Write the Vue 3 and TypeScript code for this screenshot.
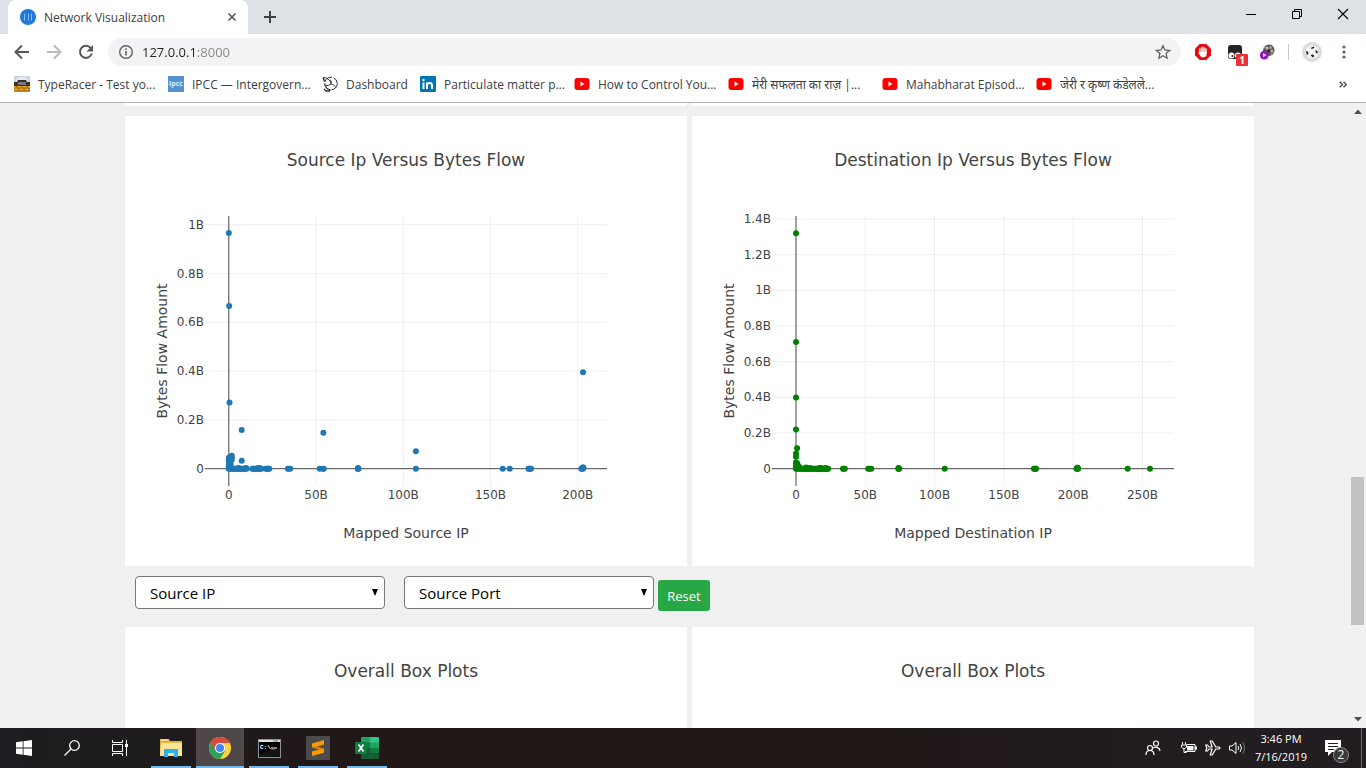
<script setup lang="ts">
import { ref } from 'vue'

interface Point { x: number; y: number }
interface Chart {
  title: string
  xTitle: string
  yTitle: string
  color: string
  originX: number
  xScale: number
  yScale: number
  xTicks: number[]
  yTicks: number[]
  points: Point[]
}

const ORIGIN_Y = 352.7

const at = (y: number, xs: number[]): Point[] => xs.map(x => ({ x, y }))
const up = (x: number, ys: number[]): Point[] => ys.map(y => ({ x, y }))

const charts: Chart[] = [
  {
    title: 'Source Ip Versus Bytes Flow',
    xTitle: 'Mapped Source IP',
    yTitle: 'Bytes Flow Amount',
    color: '#1f77b4',
    originX: 103.8,
    xScale: 1.745,
    yScale: 244,
    xTicks: [0, 50, 100, 150, 200],
    yTicks: [0, 0.2, 0.4, 0.6, 0.8, 1],
    points: [
      ...up(0, [0.966, 0.045, 0.035, 0.025, 0.015, 0.008]),
      ...up(0.2, [0.667]),
      ...up(0.4, [0.271]),
      ...up(1.7, [0.053, 0.047, 0.038]),
      ...up(1, [0.047, 0.03, 0.02, 0.01]),
      ...up(7.4, [0.159, 0.033]),
      { x: 54.2, y: 0.147 },
      { x: 107.2, y: 0.072 },
      { x: 203, y: 0.395 },
      ...at(0.005, [202.8, 203.2]),
      ...at(0.003, [5.5, 9.8, 16.8, 17.6, 74.1]),
      ...at(0, [0, 1, 2, 2.5, 3, 3.7, 4.5, 5.2, 6, 6.5, 7, 7.5, 8, 8.5, 9, 9.6, 10.3]),
      ...at(0, [13.5, 14, 14.6, 15.2, 15.8, 16.4, 17, 17.5, 18, 18.8, 21.3, 21.8, 22.2, 22.7, 23.2]),
      ...at(0, [33.9, 34.3, 35.2, 52.1, 54, 54.4, 73.9, 74, 74.3, 107.2, 157, 161, 171.8, 172, 172.8, 173.2, 202, 202.4, 203]),
    ],
  },
  {
    title: 'Destination Ip Versus Bytes Flow',
    xTitle: 'Mapped Destination IP',
    yTitle: 'Bytes Flow Amount',
    color: '#008000',
    originX: 104,
    xScale: 1.386,
    yScale: 178.3,
    xTicks: [0, 50, 100, 150, 200, 250],
    yTicks: [0, 0.2, 0.4, 0.6, 0.8, 1, 1.2, 1.4],
    points: [
      ...up(0, [1.32, 0.71, 0.4, 0.22, 0.085, 0.067, 0.035, 0.028, 0.015]),
      ...up(0.8, [0.115, 0.03, 0.02, 0.01]),
      ...up(1.7, [0.015]),
      ...at(0.007, [2.5, 7.3]),
      ...at(0.004, [10, 17, 18, 21.3, 74.1]),
      ...at(0, [0, 1, 2, 3, 3.7, 4.5, 5.2, 6, 6.500, 7, 7.5, 8, 8.5, 9, 9.7, 10.3, 11, 11.6, 12.3, 13, 13.8]),
      ...at(0, [14.6, 15.2, 15.8, 16.4, 17, 17.5, 18, 18.8, 19.5, 20.4, 21.3, 21.8, 22.2, 22.7, 23.2]),
      ...at(0, [33.9, 34.3, 35.2, 52.1, 53, 54.3, 73.8, 74, 74.4, 107.3, 171.7, 172, 172.9, 173.2, 202.4, 203.2, 203.5, 239.3, 255.4]),
      ...at(0.006, [202.9, 203.2]),
    ],
  },
]

const px = (c: Chart, x: number): number => c.originX + x * c.xScale
const py = (c: Chart, y: number): number => ORIGIN_Y - y * c.yScale
const label = (v: number): string => (v === 0 ? '0' : `${v}B`)

const address = ref('127.0.0.1:8000')
const source = ref('Source IP')
const port = ref('Source Port')
const reset = (): void => {
  source.value = 'Source IP'
  port.value = 'Source Port'
}

const bookmarks = [
  { icon: 'racer', text: 'TypeRacer - Test yo...' },
  { icon: 'ipcc', text: 'IPCC — Intergovern...' },
  { icon: 'dash', text: 'Dashboard' },
  { icon: 'linkedin', text: 'Particulate matter p...' },
  { icon: 'youtube', text: 'How to Control You...' },
  { icon: 'youtube', text: 'मेरी सफलता का राज़ |...' },
  { icon: 'youtube', text: 'Mahabharat Episod...' },
  { icon: 'youtube', text: 'जेरी र कृष्ण कंडेलले...' },
]
</script>

<template>
  <div class="screen">
    <header class="browser">
      <div class="tabstrip">
        <div class="tab">
          <svg width="16" height="16" viewBox="0 0 16 16"><circle cx="8" cy="8" r="8" fill="#1f77e0" /><path d="M4.500 4.500v7M8.500 4.500v7M11.500 4.500v7" stroke="#8cc0f5" stroke-width="1" /></svg>
          <span class="tab-title">Network Visualization</span>
          <button class="plain tab-close" aria-label="Close tab"><svg width="8" height="8" viewBox="0 0 8 8"><path d="M.5.5l7 7M7.500.5l-7 7" stroke="#4a4d51" stroke-width="1.500" /></svg></button>
        </div>
        <button class="plain new-tab" aria-label="New tab"><svg width="12" height="12" viewBox="0 0 12 12"><path d="M6 0v12M0 6h12" stroke="#3c4043" stroke-width="2" /></svg></button>
        <div class="window-controls">
          <button class="plain" aria-label="Minimize"><svg width="10" height="10" viewBox="0 0 10 10"><path d="M0 5.500h10" stroke="#000" /></svg></button>
          <button class="plain" aria-label="Restore"><svg width="10" height="10" viewBox="0 0 10 10"><path d="M.5 2.500h7v7h-7zM2.500 2.500v-2h7v7h-2" fill="none" stroke="#000" /></svg></button>
          <button class="plain" aria-label="Close"><svg width="12" height="12" viewBox="0 0 12 12"><path d="M1 1l10 10M11 1L1 11" stroke="#000" stroke-width="1.100" /></svg></button>
        </div>
      </div>

      <div class="toolbar">
        <button class="plain nav" aria-label="Back"><svg width="16" height="16" viewBox="0 0 16 16"><path d="M15 8H2M8 1.500L1.500 8 8 14.500" fill="none" stroke="#55585c" stroke-width="2" /></svg></button>
        <button class="plain nav" aria-label="Forward"><svg width="16" height="16" viewBox="0 0 16 16"><path d="M1 8h13M8 1.500L14.500 8 8 14.500" fill="none" stroke="#b9bbbe" stroke-width="2" /></svg></button>
        <button class="plain nav" aria-label="Reload"><svg width="16" height="16" viewBox="0 0 16 16"><path d="M12.800 4.200A6 6 0 1 0 13.800 9.500" fill="none" stroke="#55585c" stroke-width="2" /><path d="M15 1v6.500H8.500z" fill="#55585c" /></svg></button>
        <div class="omnibox">
          <svg width="16" height="16" viewBox="0 0 16 16"><circle cx="8" cy="8" r="6.300" fill="none" stroke="#5f6368" stroke-width="1.400" /><path d="M8 7v4.500M8 4.300v1.700" stroke="#5f6368" stroke-width="1.600" /></svg>
          <input v-model="address" class="address" aria-label="Address" spellcheck="false">
          <button class="plain" aria-label="Bookmark"><svg width="16" height="16" viewBox="0 0 16 16"><path d="M8 1.700l1.900 4.300 4.700.5-3.500 3.100 1 4.600L8 11.800l-4.100 2.400 1-4.600L1.400 6.500l4.700-.5z" fill="none" stroke="#5f6368" stroke-width="1.300" /></svg></button>
        </div>
        <div class="extensions">
          <button class="plain" aria-label="Ad blocker"><svg width="16" height="16" viewBox="0 0 16 16"><path d="M4.700 0h6.600L16 4.700v6.600L11.300 16H4.700L0 11.300V4.700z" fill="#e40d12" /><path d="M5 8.500V5M7 8.500V3.500M9 8.500V3.500M11 8.500V5" stroke="#fff" stroke-width="1.500" stroke-linecap="round" /><path d="M4.300 8h7.400v2c0 4-5 4-6.200 2.200L3.300 8.700l.8-.6z" fill="#fff" /></svg></button>
          <button class="plain badge-host" aria-label="Userscripts">
            <svg width="16" height="16" viewBox="0 0 16 16"><rect x="1" y="1" width="14" height="14" rx="3" fill="#252525" /><circle cx="4.500" cy="11.500" r="3" fill="#fff" /><circle cx="11" cy="11.500" r="3" fill="#fff" /><circle cx="5.500" cy="12" r="1" fill="#222" /></svg>
            <span class="badge">1</span>
          </button>
          <button class="plain" aria-label="Recorder"><svg width="16" height="16" viewBox="0 0 18 18"><circle cx="11" cy="7" r="6.500" fill="#5c5852" /><circle cx="9" cy="4.500" r="1.800" fill="#c7c3b9" /><circle cx="13" cy="4" r="1.600" fill="#a7a298" /><circle cx="14.500" cy="8" r="1.700" fill="#bdb8ad" /><circle cx="11" cy="8" r="1.500" fill="#272521" /><path d="M4 6l3-3M13 12l2-1" stroke="#c9c5b9" /><circle cx="6" cy="12.500" r="5" fill="#9118be" /><path d="M4.500 10v5l4-2.500z" fill="#e8c9f2" /></svg></button>
          <span class="rule" />
          <button class="plain" aria-label="Profile"><svg width="20" height="20" viewBox="0 0 20 20"><circle cx="10" cy="10" r="10" fill="#dcdcdc" /><circle cx="10" cy="10" r="6.500" fill="#f7f7f7" /><path d="M8.500 6l3-1.500 1 1.200-2.500 1.300zM4 9l2 .5.500 2.500-1.700 1zM13.500 8l2 1v2.500l-1.800-.8zM8.500 13l2.500-.5 1.500 1.500-2 1.500z" fill="#1f1f1f" /></svg></button>
          <button class="plain menu" aria-label="Menu"><svg width="4" height="14" viewBox="0 0 4 14"><g fill="#5f6368"><circle cx="2" cy="2" r="1.600" /><circle cx="2" cy="7" r="1.600" /><circle cx="2" cy="12" r="1.600" /></g></svg></button>
        </div>
      </div>

      <nav class="bookmarks">
        <a v-for="(b, i) in bookmarks" :key="i" href="#" class="bookmark" :class="{ short: b.icon === 'dash' }">
          <svg v-if="b.icon === 'racer'" width="16" height="16" viewBox="0 0 16 16"><rect width="16" height="7" fill="#cdd3e6" /><path d="M2 8V4l3-3h6l3 3v4z" fill="#e8e9ee" /><path d="M0 6h3l1-2h8l1 2h3v4H0z" fill="#34312d" /><path d="M4 6h8v3H4z" fill="#77777c" /><path d="M0 10h16v6H0z" fill="#e9a61b" /><path d="M0 12h16M0 15h16M3 10v2M8 10v2M13 10v2M5 12v3M10 12v3M15 12v3" stroke="#8f5710" stroke-width=".8" /></svg>
          <svg v-else-if="b.icon === 'ipcc'" width="16" height="16" viewBox="0 0 16 16"><rect width="16" height="16" fill="#5593d2" /><text x="8" y="10" text-anchor="middle" font-size="7" fill="#dcecff" font-weight="bold">ipcc</text></svg>
          <svg v-else-if="b.icon === 'dash'" width="16" height="16" viewBox="0 0 16 16" fill="none" stroke="#333"><circle cx="9" cy="7.500" r="6.300" stroke-dasharray="9 1.500" /><path d="M1 1.500c4 0 7 2.500 8 5.500M8 4c2 1 2 3 0 4.500s-4 1-6 0M8 8.500c2-1 4.500 0 5.500 3M4 10a4 4 0 0 0 5 4" /><path d="M1 1.500l1.500 4M2 13l2 2 4 0" stroke-width="1.400" /></svg>
          <svg v-else-if="b.icon === 'linkedin'" width="16" height="16" viewBox="0 0 16 16"><rect width="16" height="16" rx="1" fill="#0077b5" /><path d="M3.500 6.500v6.500M7 6.500V13M7 9.500c0-3.200 5-3.200 5 0V13" fill="none" stroke="#fff" stroke-width="2" /><circle cx="3.500" cy="4" r="1.200" fill="#fff" /></svg>
          <svg v-else width="16" height="16" viewBox="0 0 16 16"><rect y="2" x="0.500" width="15" height="12" rx="3" fill="#f00" /><path d="M6.500 5.500v5l4-2.500z" fill="#fff" /></svg>
          <span>{{ b.text }}</span>
        </a>
        <button class="plain more" aria-label="More bookmarks"><svg width="8" height="7" viewBox="0 0 8 7"><path d="M.7.7l2.800 2.800L.7 6.300M4.500.7l2.800 2.800-2.800 2.800" fill="none" stroke="#4a4d51" stroke-width="1.400" /></svg></button>
      </nav>
    </header>

    <div class="viewport">
      <main class="page">
        <div class="cards strip"><div class="card" /><div class="card" /></div>
        <div class="cards">
          <section v-for="c in charts" :key="c.title" class="card">
            <svg class="plot" viewBox="0 0 562 450">
              <text class="title" x="281" y="50">{{ c.title }}</text>
              <g class="grid">
                <line v-for="t in c.xTicks.slice(1)" :key="'x' + t" :x1="px(c, t)" :x2="px(c, t)" y1="100" y2="370" />
                <line v-for="t in c.yTicks.slice(1)" :key="'y' + t" :y1="py(c, t)" :y2="py(c, t)" x1="80" x2="482" />
                <line class="zero" :x1="px(c, 0)" :x2="px(c, 0)" y1="100" y2="370" />
                <line class="zero" :y1="py(c, 0)" :y2="py(c, 0)" x1="80" x2="482" />
              </g>
              <g :fill="c.color">
                <circle v-for="(p, i) in c.points" :key="i" :cx="px(c, p.x)" :cy="py(c, p.y)" r="3" />
              </g>
              <text v-for="t in c.xTicks" :key="'lx' + t" class="tick mid" :x="px(c, t)" y="383">{{ label(t) }}</text>
              <text v-for="t in c.yTicks" :key="'ly' + t" class="tick end" x="79" :y="py(c, t) + 4">{{ label(t) }}</text>
              <text class="axis" x="281" y="422">{{ c.xTitle }}</text>
              <text class="axis" x="0" y="0" transform="translate(42 235) rotate(-90)">{{ c.yTitle }}</text>
            </svg>
          </section>
        </div>

        <form class="filters" @submit.prevent="reset">
          <label class="pick">
            <select v-model="source" aria-label="Source or destination IP">
              <option>Source IP</option>
              <option>Destination IP</option>
            </select>
            <svg width="6" height="7" viewBox="0 0 6 7"><path d="M0 0h6L3 7z" fill="#000" /></svg>
          </label>
          <label class="pick">
            <select v-model="port" aria-label="Source or destination port">
              <option>Source Port</option>
              <option>Destination Port</option>
            </select>
            <svg width="6" height="7" viewBox="0 0 6 7"><path d="M0 0h6L3 7z" fill="#000" /></svg>
          </label>
          <button type="submit" class="reset">Reset</button>
        </form>

        <div class="cards">
          <section v-for="n in 2" :key="n" class="card">
            <svg class="plot" viewBox="0 0 562 450"><text class="title" x="281" y="50">Overall Box Plots</text></svg>
          </section>
        </div>
      </main>
      <div class="scrollbar">
        <button class="plain arrow" aria-label="Scroll up"><svg width="8" height="5" viewBox="0 0 8 5"><path d="M0 5l4-4.500L8 5z" fill="#505050" /></svg></button>
        <div class="before" />
        <div class="thumb" />
        <div class="after" />
        <button class="plain arrow" aria-label="Scroll down"><svg width="8" height="5" viewBox="0 0 8 5"><path d="M0 0l4 4.500L8 0z" fill="#505050" /></svg></button>
      </div>
    </div>

    <footer class="taskbar">
      <button class="plain task" aria-label="Start"><svg width="16" height="16" viewBox="0 0 16 16"><path d="M0 2.200L6.700 1.300V7.600H0zM7.500 1.200L16 0v7.600H7.500zM0 8.400h6.700v6.300L0 13.800zM7.500 8.400H16V16l-8.500-1.200z" fill="#fff" /></svg></button>
      <button class="plain task" aria-label="Search"><svg width="16" height="16" viewBox="0 0 16 16" fill="none" stroke="#fff" stroke-width="1.300"><circle cx="10.500" cy="5.500" r="4.800" /><path d="M7 9L.5 15.500" /></svg></button>
      <button class="plain task" aria-label="Task view"><svg width="16" height="16" viewBox="0 0 16 16" fill="none" stroke="#fff"><path d="M.5 4.500h10v7H.5zM.5 0v2.500h10V0M.5 16v-2.500h10V16M14.500 0v16" /><rect x="13.500" y="4.500" width="2" height="2" fill="#fff" /></svg></button>
      <button class="plain task open first" aria-label="File Explorer"><svg width="22" height="20" viewBox="0 0 22 20"><path d="M0 1h9l1 2h12v15H0z" fill="#e3b341" /><path d="M1 5h21v13H0z" fill="#fde596" /><path d="M1 2h7" stroke="#fff3c4" /><path d="M4 19v-8h14v8h-4v-4H8v4z" fill="#31b1ea" /></svg></button>
      <button class="plain task open active" aria-label="Chrome"><svg width="22" height="22" viewBox="0 0 22 22"><circle cx="11" cy="11" r="11" fill="#fdd23f" /><path d="M11 11L1.500 5.500A11 11 0 0 0 11 22l5-8z" fill="#29a35a" /><path d="M1.500 5.500A11 11 0 0 1 20.800 6H11L6.200 13.500z" fill="#db4a3f" /><circle cx="11" cy="11" r="5.100" fill="#fff" /><circle cx="11" cy="11" r="4" fill="#4285f4" /></svg></button>
      <button class="plain task open" aria-label="Command Prompt"><svg width="23" height="19" viewBox="0 0 23 19"><rect x=".5" y=".5" width="22" height="18" fill="#000" stroke="#8c9096" /><path d="M1 2h21" stroke="#dfe3e8" stroke-width="2" /><path d="M15 2h5" stroke="#5a7696" /><path d="M2 15L22 8v10H2z" fill="#222" opacity=".6" /><text x="2" y="10" font-size="6" font-weight="bold" fill="#fff" class="mono">C:\_</text><path d="M13 9h6" stroke="#fff" /></svg></button>
      <button class="plain task open" aria-label="Sublime Text"><svg width="24" height="24" viewBox="0 0 24 24"><rect width="24" height="24" rx="1" fill="#4b4b4b" /><path d="M6 7.500l12-3.500v4.500l-7 2 7 2.300v4L6 20v-4.400l7-2.200-7-2.200z" fill="#ff9800" /><path d="M11 10.500l7 2.300-5 .6-7-2.200z" fill="#d87700" /></svg></button>
      <button class="plain task open" aria-label="Excel"><svg width="24" height="22" viewBox="0 0 24 22"><path d="M6 1q0-1 1-1h8v6H6z" fill="#21a366" /><path d="M15 0h8q1 0 1 1v5h-9z" fill="#33c481" /><path d="M6 5.500h9V11H6z" fill="#107c41" /><path d="M15 5.500h9V11h-9z" fill="#21a366" /><path d="M6 11h9v5.500H6z" fill="#185c37" /><path d="M15 11h9v5.500h-9z" fill="#107c41" /><path d="M6 16.500h18V21q0 1-1 1H7q-1 0-1-1z" fill="#185c37" /><rect y="5" width="12" height="12" rx="1" fill="#107c41" /><path d="M3.500 7.500l5 7M8.500 7.500l-5 7" stroke="#fff" stroke-width="1.700" /></svg></button>

      <div class="tray">
        <button class="plain people" aria-label="People"><svg width="16" height="16" viewBox="0 0 16 16" fill="none" stroke="#fff" stroke-width="1.200"><circle cx="5" cy="8" r="2.500" /><path d="M1 15c0-6 8-6 8 0M7.500 8.200C11 6 15 8 15 11" /><circle cx="11" cy="3.500" r="2.500" /></svg></button>
        <button class="plain" aria-label="Battery"><svg width="16" height="12" viewBox="0 0 16 12"><path d="M5.500 2.500h8.500v7H4" fill="none" stroke="#fff" /><path d="M6 4h6.500v4.500H6zM14 4.500h2v3h-2z" fill="#fff" /><path d="M1.500 0v2.500M4.500 0v2.500M.5 3h5v2L4 6.500H2L.5 5zM3 6v4.500h2.500" fill="none" stroke="#fff" /></svg></button>
        <button class="plain" aria-label="Airplane mode"><svg width="16" height="16" viewBox="0 0 16 16"><path d="M.8 5h1.700L4 7h3L5.300 1h1.900l3.600 6H14q2 1 0 2h-3.200l-3.600 6H5.300L7 9H4l-1.500 2H.8l1-3z" fill="none" stroke="#fff" stroke-width="1.200" /></svg></button>
        <button class="plain" aria-label="Volume"><svg width="16" height="14" viewBox="0 0 16 14" fill="none" stroke="#fff"><path d="M.5 5h2.500l4-3.500v11L3 9H.5z" /><path d="M9 5q1.500 2 0 4M11 3q3 4 0 8" /><path d="M13.500 1q4 6 0 12" stroke="#77777a" /></svg></button>
        <div class="clock"><span>3:46 PM</span><span>7/16/2019</span></div>
        <button class="plain notes" aria-label="Notifications, 2 new"><svg width="26" height="26" viewBox="0 0 26 26"><path d="M1 2h16v12H8l-4 4v-4H1z" fill="#fff" /><path d="M4 5.500h10M4 8.500h10M4 11.500h6" stroke="#242022" /><circle cx="17" cy="17" r="7.500" fill="#3b3839" stroke="#908e8f" /><text x="17" y="21" text-anchor="middle" font-size="12" fill="#fff">2</text></svg></button>
      </div>
    </footer>
  </div>
</template>

<style>
body { margin: 0; }
</style>

<style scoped>
.screen {
  height: 100vh;
  display: flex;
  flex-direction: column;
  overflow: hidden;
  font-family: "Open Sans", "Noto Sans", sans-serif;
  font-size: 12px;
  color: #3c4043;
}
svg { display: block; flex: none; }
.plain {
  display: flex;
  align-items: center;
  justify-content: center;
  padding: 0;
  border: 0;
  background: none;
  font: inherit;
  color: inherit;
}
.browser { background: #fff; border-bottom: 1px solid #b3b3b3; }
.tabstrip { display: flex; height: 34px; background: #dee1e6; padding-left: 8px; }
.tab {
  display: flex;
  align-items: center;
  gap: 8px;
  width: 240px;
  box-sizing: border-box;
  padding: 0 12px;
  background: #fff;
  border-radius: 8px 8px 0 0;
}
.tab-title { flex: 1; white-space: nowrap; }
.new-tab { width: 44px; }
.window-controls { display: flex; margin-left: auto; }
.window-controls .plain { width: 46px; height: 28px; }
.toolbar { display: flex; align-items: center; height: 36px; padding: 0 20px 0 6px; }
.nav { width: 32px; height: 32px; }
.omnibox {
  display: flex;
  align-items: center;
  flex: 1;
  height: 28px;
  margin-left: 6px;
  padding: 0 10px;
  gap: 8px;
  border-radius: 14px;
  background: #f1f3f4;
}
.address {
  flex: 1;
  min-width: 0;
  padding: 0;
  border: 0;
  outline: 0;
  font: 13px/20px "Open Sans", sans-serif;
  color: transparent;
  background: linear-gradient(90deg, #202124 54px, #80868b 54px);
  background-clip: text;
  -webkit-background-clip: text;
}
.extensions { display: flex; align-items: center; gap: 16px; padding-left: 14px; }
.menu { margin-left: 4px; }
.badge-host { position: relative; }
.badge {
  position: absolute;
  left: 9px;
  top: 10px;
  width: 12px;
  height: 12px;
  border-radius: 1px;
  background: #ee3033;
  color: #fff;
  font-size: 10px;
  line-height: 12px;
  font-weight: 700;
}
.rule { width: 1px; height: 16px; background: #c6c9cc; margin: 0 -3px; }
.bookmarks { display: flex; align-items: center; height: 28px; padding: 0 19px 4px 14px; }
.bookmark {
  display: flex;
  align-items: center;
  gap: 8px;
  width: 154px;
  color: inherit;
  text-decoration: none;
  white-space: nowrap;
}
.bookmark.short { width: 98px; }
.more { margin-left: auto; }
.viewport { flex: 1; display: flex; min-height: 0; background: #f0f0f0; }
.page { flex: 1; min-width: 0; padding: 0 95px 0 125px; overflow: hidden; }
.cards { display: grid; grid-template-columns: 1fr 1fr; gap: 5px; }
.card { background: #fff; overflow: hidden; }
.strip { height: 3px; margin-bottom: 10px; }
.plot { width: 100%; height: auto; font-family: Verdana, "DejaVu Sans", sans-serif; fill: #444; }
.title { font-size: 17px; text-anchor: middle; }
.tick { font-size: 12px; }
.mid { text-anchor: middle; }
.end { text-anchor: end; }
.axis { font-size: 14px; text-anchor: middle; }
.grid line { stroke: #eee; stroke-width: 1; }
.grid .zero { stroke: #444; }
.filters { display: flex; padding: 10px; height: 41px; }
.pick { position: relative; margin-right: 19px; }
.pick + .pick { margin-right: 4px; }
.pick select {
  appearance: none;
  width: 250px;
  height: 33px;
  padding: 0 14px;
  border: 1px solid #777;
  border-radius: 4px;
  background: #fff;
  color: #000;
  font: 15px "Open Sans", sans-serif;
}
.pick svg { position: absolute; right: 7px; top: 13px; pointer-events: none; }
.reset {
  align-self: flex-start;
  width: 52px;
  height: 31px;
  margin-top: 4px;
  padding: 0;
  border: 0;
  border-radius: 3px;
  background: #28a745;
  color: #fff;
  font: 13px "Open Sans", sans-serif;
}
.scrollbar { display: flex; flex-direction: column; width: 17px; background: #f1f1f1; }
.arrow { height: 17px; }
.before { flex: 357; }
.thumb { flex: 148; margin: 0 2px; background: #c1c1c1; }
.after { flex: 86; }
.taskbar {
  display: flex;
  height: 40px;
  background: linear-gradient(90deg, #1d1e22, #211817 24%, #211716 60%, #211d20 88%);
  color: #fff;
}
.task { width: 48px; margin-right: 1px; border-bottom: 2px solid transparent; border-top: 2px solid transparent; }
.task:not(.open) { margin-right: 0; }
.first { margin-left: 3px; }
.open { background: linear-gradient(#76b9ed, #76b9ed) center bottom / 40px 2px no-repeat border-box; }
.active { background: linear-gradient(#76b9ed, #76b9ed) center bottom / 48px 2px no-repeat border-box, #4e4647; }
.mono { font-family: "Liberation Mono", monospace; }
.tray { display: flex; align-items: center; margin-left: auto; gap: 8px; padding-right: 4px; border-right: 1px solid #69676a; margin-right: 4px; }
.people { margin-right: 12px; }
.clock { display: flex; flex-direction: column; align-items: center; width: 56px; line-height: 18px; font-size: 11px; }
.notes { margin: 6px 7px 0 7px; }
</style>
